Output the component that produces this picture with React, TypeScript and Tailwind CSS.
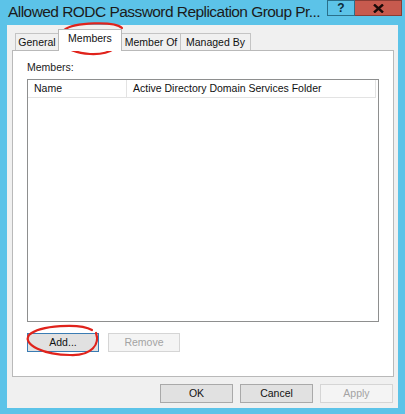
export default function App() {
  const tabs = [
    { label: "General", w: "w-[44px]" },
    { label: "Members", w: "w-[64px]", active: true },
    { label: "Member Of", w: "w-[60px]" },
    { label: "Managed By", w: "w-[71px]" },
  ];

  return (
    <div
      className="relative w-[405px] h-[414px] bg-[#5cc3e8] flex flex-col overflow-hidden"
      style={{ fontFamily: '"Liberation Sans", Arial, sans-serif' }}
    >
      {/* title bar */}
      <div className="h-[25px] flex items-start shrink-0">
        <div className="pl-[8px] pt-[3px] text-[15.5px] tracking-[-0.55px] leading-[18px] text-[#1b1b1b] flex-1 whitespace-nowrap">
          Allowed RODC Password Replication Group Pr...
        </div>
        <div className="flex mr-[3px]">
          <div className="w-[28px] h-[16px] border border-[#2a6f8a] bg-[#5cc3e8] flex items-center justify-center text-[12px] font-bold text-[#0d2a3a]">
            ?
          </div>
          <div className="w-[47px] h-[16px] border border-l-0 border-[#8a3c34] bg-[#c75a4e] flex items-center justify-center">
            <svg width="11" height="9" viewBox="0 0 11 9">
              <path d="M1 0.5 L10 8.5 M10 0.5 L1 8.5" stroke="#1a0a08" strokeWidth="2.4" />
            </svg>
          </div>
        </div>
      </div>

      {/* dialog body */}
      <div className="mx-[7px] mb-[6px] flex-1 bg-[#f0f0f0] flex flex-col text-[10.5px] text-[#111]">
        {/* tabs */}
        <div className="flex items-end h-[25px] pl-[8px] relative z-10">
          {tabs.map((t, i) =>
            t.active ? (
              <div
                key={i}
                className={`${t.w} h-[22px] -ml-px bg-white border border-b-0 border-[#b9b9b9] flex items-center justify-center relative z-10 mb-[-1px] pb-[4px]`}
              >
                {t.label}
              </div>
            ) : (
              <div
                key={i}
                className={`${t.w} h-[17px] bg-[#f0f0f0] border border-b-0 border-[#c4c4c4] flex items-center justify-center -ml-px first:ml-0 pt-px`}
              >
                {t.label}
              </div>
            )
          )}
        </div>

        {/* tab panel */}
        <div className="ml-[5px] mr-[4px] h-[327px] bg-white border border-[#b9b9b9] flex flex-col px-[14px]">
          <div className="pt-[9px] h-[28px] text-[#222]">Members:</div>
          <div className="h-[243px] border border-[#8e8f8f] flex flex-col">
            <div className="flex h-[18px] items-center text-[#111] mr-[2px]">
              <div className="w-[99px] h-full border-r border-b border-[#e3e3e3] pl-[6px] flex items-center">
                Name
              </div>
              <div className="flex-1 h-full border-r border-b border-[#e3e3e3] pl-[6px] flex items-center">
                Active Directory Domain Services Folder
              </div>
            </div>
          </div>
          <div className="flex gap-[9px] mt-[11px]">
            <div className="w-[72px] h-[19px] bg-[#e1e1e1] border border-[#3a7cb3] flex items-center justify-center">
              Add...
            </div>
            <div className="w-[72px] h-[19px] bg-[#f4f4f4] border border-[#d5d5d5] flex items-center justify-center text-[#a3a3a3]">
              Remove
            </div>
          </div>
        </div>

        {/* bottom buttons */}
        <div className="flex justify-end gap-[7px] mt-[7px] mr-[5px]">
          <div className="w-[73px] h-[19px] bg-[#e1e1e1] border border-[#a9a9a9] flex items-center justify-center">
            OK
          </div>
          <div className="w-[73px] h-[19px] bg-[#e1e1e1] border border-[#a9a9a9] flex items-center justify-center">
            Cancel
          </div>
          <div className="w-[73px] h-[19px] bg-[#f4f4f4] border border-[#d5d5d5] flex items-center justify-center text-[#a3a3a3]">
            Apply
          </div>
        </div>
      </div>

      {/* red annotations */}
      <svg
        className="absolute inset-0 pointer-events-none"
        width="405"
        height="414"
        viewBox="0 0 405 414"
      >
        <path
          d="M122 28 C115 21 74 22 64 30 C54 38 62 52 90 54 C112 55 122 46 119 34"
          fill="none"
          stroke="#e0231c"
          strokeWidth="2.2"
          strokeLinecap="round"
        />
        <path
          d="M92 330 C80 323 40 325 29 335 C22 345 45 355 70 355 C92 356 100 344 96 333"
          fill="none"
          stroke="#e0231c"
          strokeWidth="2.2"
          strokeLinecap="round"
        />
      </svg>
    </div>
  );
}
